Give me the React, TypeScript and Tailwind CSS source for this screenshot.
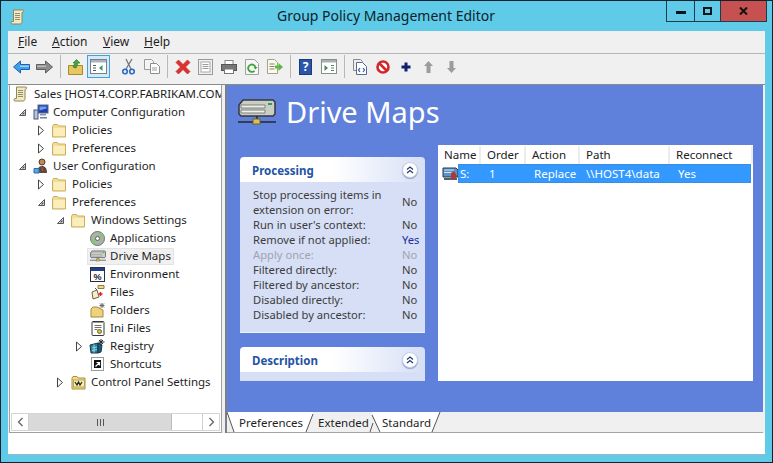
import React from "react";

const FONT = "font-['Noto_Sans','Open_Sans',sans-serif]";

type IconProps = { className?: string };

function Scroll({ className = "w-[15px] h-[16px] shrink-0" }: IconProps) {
  return (
    <svg viewBox="0 0 15 16" className={className}>
      <path d="M3.500 1h9.500c1 0 1 1.500 0 2l-1 .5v9c0 1.500-.8 2.500-2 2.500H2c-1.500 0-1.500-2 0-2.500h1.500z" fill="#f5e8bb" stroke="#8f8460" />
      <path d="M5 4.500h5M5 6.500h5M5 8.500h5M5 10.500h5" stroke="#8d8d80" />
    </svg>
  );
}

function Folder({ className = "w-[15px] h-[15px]" }: IconProps) {
  return (
    <svg viewBox="0 0 15 15" className={className}>
      <path d="M.5 3.500 1.500 1.500h4l1 1.500h7v11h-13z" fill="#f3dc97" stroke="#c8b063" />
      <path d="M1.500 5h11.500v8H1.500z" fill="#fbeebb" />
    </svg>
  );
}

function ComputerIcon() {
  return (
    <svg viewBox="0 0 16 16" className="w-4 h-4">
      <rect x="5" y="1" width="10" height="8" fill="#1f3fb0" stroke="#5a6b8a" />
      <path d="M6.500 2.500h7v2l-7 2z" fill="#6ea0f0" />
      <path d="M7 10h6v1.500H7z" fill="#8a94a8" />
      <rect x="1" y="6" width="4" height="9" fill="#b8c6dc" stroke="#46587a" />
      <path d="M7 13h7v1.500H7z" fill="#6f7f9f" />
    </svg>
  );
}

function UserIcon() {
  return (
    <svg viewBox="0 0 16 16" className="w-4 h-4">
      <circle cx="9" cy="4" r="3" fill="#b98a5a" stroke="#5e3d20" />
      <path d="M4 15c0-5 2-7 5-7s5 2 5 7z" fill="#5b4a3a" />
      <path d="M1 10.500h5v4.500H1z" fill="#57a6e8" stroke="#2f6cae" />
      <path d="M8.500 8.500 10 13" stroke="#d24a3a" />
    </svg>
  );
}

function AppIcon() {
  return (
    <svg viewBox="0 0 15 15" className="w-[15px] h-[15px]">
      <circle cx="7.500" cy="7.500" r="7" fill="#a9b3a9" stroke="#6c7268" />
      <path d="M7.500 7.500 11 1.500a7 7 0 0 1 3 5zM7.500 7.500 4 13.500a7 7 0 0 1-3-5z" fill="#8cc27a" />
      <circle cx="7.500" cy="7.500" r="2" fill="#fff" stroke="#5c625a" />
    </svg>
  );
}

function DriveIcon({ className = "w-[16px] h-[14px]" }: IconProps) {
  return (
    <svg viewBox="0 0 38 26" className={className}>
      <path d="M5 1h30l2 2v12l-2 2H3l-2-2V6z" fill="#c9cdc6" stroke="#34383a" strokeWidth="1.500" />
      <path d="M3 6h24v3H3zM3 11h24v3H3z" fill="#eef0ea" stroke="#7d827e" />
      <rect x="30" y="4" width="4" height="2" fill="#2f9a5a" />
      <path d="M19 17v4M0 23h38" stroke="#23282a" strokeWidth="1.500" />
      <rect x="15" y="20" width="7" height="5" fill="#d8c05a" stroke="#6f6524" />
    </svg>
  );
}

function EnvIcon() {
  return (
    <svg viewBox="0 0 15 15" className="w-[15px] h-[15px]">
      <rect x=".5" y=".5" width="14" height="14" fill="#fff" stroke="#25304a" />
      <rect x="1" y="1" width="13" height="3" fill="#243f8a" />
      <text x="7.500" y="13" textAnchor="middle" fontSize="9" fontFamily="Liberation Sans" fontWeight="700" fill="#222">%</text>
    </svg>
  );
}

function FilesIcon() {
  return (
    <svg viewBox="0 0 16 16" className="w-4 h-4">
      <path d="M8 1.500h6v3H8z" fill="#f0d98c" stroke="#8f7d3a" />
      <path d="M2 8l5-2 2 7-6 2z" fill="#f6eecb" stroke="#6c6440" />
      <path d="M10.500 8v4M8.500 10h4" stroke="#d8202a" strokeWidth="1.500" />
      <path d="M5 4l2 2" stroke="#555" />
    </svg>
  );
}

function FoldersIcon() {
  return (
    <svg viewBox="0 0 16 16" className="w-4 h-4">
      <path d="M1 7l2-2h4l6 3v7H1z" fill="#eed27e" stroke="#a58b3e" />
      <path d="M12 1v5M9.500 3.500h5M10 1.500l4 4M14 1.500l-4 4" stroke="#6a6a6a" />
    </svg>
  );
}

function IniIcon() {
  return (
    <svg viewBox="0 0 14 16" className="w-[14px] h-4">
      <rect x="1" y="1.500" width="12" height="14" rx="1" fill="#fff" stroke="#34383a" />
      <path d="M3 1v2M5 1v2M7 1v2M9 1v2M11 1v2" stroke="#333" />
      <path d="M3.500 5.500h7M3.500 7.500h7M3.500 9.500h3" stroke="#6c7268" />
      <circle cx="8.500" cy="11.500" r="2" fill="#d8c33a" stroke="#6c6420" />
    </svg>
  );
}

function RegistryIcon() {
  return (
    <svg viewBox="0 0 17 16" className="w-[17px] h-4">
      <path d="M1 7l8-2v10H2z" fill="#2a7f9e" stroke="#12384c" />
      <path d="M9 5l4 2-1 7-3 1z" fill="#1c5a75" stroke="#12384c" />
      <path d="M3 10l5-1M3 12.500l5-1M5 6.500v8" stroke="#9fd6e6" />
      <path d="M12 1v6M9.500 4h6M10 2l4 4M14 2l-4 4" stroke="#20282c" />
    </svg>
  );
}

function ShortcutIcon() {
  return (
    <svg viewBox="0 0 13 14" className="w-[13px] h-[14px]">
      <rect x=".5" y=".5" width="12" height="13" fill="#fff" stroke="#9a9a9a" />
      <rect x="3" y="3" width="7" height="8" fill="#111" />
      <path d="M4.500 9.500 8 6M5.500 5.500H8.500V8.500" stroke="#fff" strokeWidth="1.200" fill="none" />
    </svg>
  );
}

function ControlIcon() {
  return (
    <svg viewBox="0 0 16 15" className="w-4 h-[15px]">
      <path d="M1 3l1-1.500h4l1 1.500h7v11H1z" fill="#f3dc8c" stroke="#a8913f" />
      <rect x="2.500" y="5" width="11" height="7" fill="#f8eeb8" stroke="#b8a34f" />
      <path d="M4 7l2 3 1.500-3 1.500 3 2-3" stroke="#242424" strokeWidth="1.300" fill="none" />
    </svg>
  );
}

function Arrow({ kind }: { kind: "open" | "closed" | "none" }) {
  if (kind === "none") return <span className="w-[9px] h-[9px]" />;
  if (kind === "open")
    return (
      <svg viewBox="0 0 9 9" className="w-[9px] h-[9px]">
        <path d="M7.500 1.500v6h-6z" fill="#fff" stroke="#555" />
        <path d="M6.500 3.500v3h-3z" fill="#555" />
      </svg>
    );
  return (
    <svg viewBox="0 0 9 11" className="w-[9px] h-[11px]">
      <path d="M1.500 1v9l5-4.500z" fill="#fff" stroke="#444" />
    </svg>
  );
}

type TreeRow = { label: string; depth: number; arrow: "open" | "closed" | "none"; icon: React.ReactNode; selected?: boolean };

const rows: TreeRow[] = [
  { label: "Computer Configuration", depth: 0, arrow: "open", icon: <ComputerIcon /> },
  { label: "Policies", depth: 1, arrow: "closed", icon: <Folder /> },
  { label: "Preferences", depth: 1, arrow: "closed", icon: <Folder /> },
  { label: "User Configuration", depth: 0, arrow: "open", icon: <UserIcon /> },
  { label: "Policies", depth: 1, arrow: "closed", icon: <Folder /> },
  { label: "Preferences", depth: 1, arrow: "open", icon: <Folder /> },
  { label: "Windows Settings", depth: 2, arrow: "open", icon: <Folder /> },
  { label: "Applications", depth: 3, arrow: "none", icon: <AppIcon /> },
  { label: "Drive Maps", depth: 3, arrow: "none", icon: <DriveIcon />, selected: true },
  { label: "Environment", depth: 3, arrow: "none", icon: <EnvIcon /> },
  { label: "Files", depth: 3, arrow: "none", icon: <FilesIcon /> },
  { label: "Folders", depth: 3, arrow: "none", icon: <FoldersIcon /> },
  { label: "Ini Files", depth: 3, arrow: "none", icon: <IniIcon /> },
  { label: "Registry", depth: 3, arrow: "closed", icon: <RegistryIcon /> },
  { label: "Shortcuts", depth: 3, arrow: "none", icon: <ShortcutIcon /> },
  { label: "Control Panel Settings", depth: 2, arrow: "closed", icon: <ControlIcon /> },
];

const depthClass = ["pl-[8px]", "pl-[27px]", "pl-[46px]", "pl-[65px]"];

function Tree() {
  return (
    <div className="flex-1 overflow-hidden text-[11.5px]">
      <div className="h-[18px] flex items-center pl-[3px] whitespace-nowrap text-[#1e1e1e]">
        <Scroll />
        <span className="ml-[6px]">Sales [HOST4.CORP.FABRIKAM.COM</span>
      </div>
      {rows.map((r, i) => (
        <div key={i} className={`h-[18px] flex items-center whitespace-nowrap text-[#1e1e1e] ${depthClass[r.depth]}`}>
          <span className="w-[15px] flex justify-start items-center">
            <Arrow kind={r.arrow} />
          </span>
          <span className={`flex items-center h-[17px] -ml-[3px] pl-[1px] pr-[2px] ${r.selected ? "bg-[#f0f0f0] border border-[#e4e4e4] -my-px" : "border border-transparent"}`}>
            <span className="w-[17px] flex justify-center items-center mr-[4px]">{r.icon}</span>
            <span>{r.label}</span>
          </span>
        </div>
      ))}
    </div>
  );
}

function TreeScrollbar() {
  return (
    <div className="h-[18px] mx-px mb-px flex items-stretch border border-[#d5d5d5] bg-white">
      <div className="w-[17px] border-r border-[#d0d0d0] flex items-center justify-center">
        <svg viewBox="0 0 7 10" className="w-[7px] h-[10px]"><path d="M5.500 1 1.500 5l4 4" fill="none" stroke="#666" strokeWidth="1.300" /></svg>
      </div>
      <div className="w-[143px] bg-[#d9d9d9] flex items-center justify-center gap-px border-r border-[#bdbdbd]">
        <span className="w-px h-[7px] bg-[#555]" />
        <span className="w-px h-[7px] bg-[#555] ml-px" />
        <span className="w-px h-[7px] bg-[#555] ml-px" />
      </div>
      <div className="flex-1" />
      <div className="w-[17px] border-l border-[#d0d0d0] flex items-center justify-center">
        <svg viewBox="0 0 7 10" className="w-[7px] h-[10px]"><path d="M1.500 1l4 4-4 4" fill="none" stroke="#666" strokeWidth="1.300" /></svg>
      </div>
    </div>
  );
}

function Sep({ w = "w-[8px]" }: { w?: string }) {
  return <span className={`${w} flex justify-center`}><span className="w-px h-[23px] bg-[#b8b8b8]" /></span>;
}

function ToolBtn({ children, active }: { children: React.ReactNode; active?: boolean }) {
  return (
    <span className={`w-[23px] h-[23px] flex items-center justify-center ${active ? "bg-[#d5e9f7] border border-[#3fa2dc]" : ""}`}>
      {children}
    </span>
  );
}

function Toolbar() {
  return (
    <div className="h-[30px] flex items-start pt-px pl-[2px] bg-[#f0f0f0] shrink-0">
      <ToolBtn>
        <svg viewBox="0 0 17 14" className="w-[17px] h-[14px]"><path d="M.5 7 7.500 1v3.500h9v5h-9V13z" fill="#3f9fe8" stroke="#1f5fb0" /><path d="M7 5.500h9v1.500H7z" fill="#9ad3f8" /></svg>
      </ToolBtn>
      <ToolBtn>
        <svg viewBox="0 0 17 14" className="w-[17px] h-[14px]"><path d="M16.500 7 9.500 1v3.500h-9v5h9V13z" fill="#8a8a8a" stroke="#5e5e5e" /><path d="M1 5.500h9v1.500H1z" fill="#bcbcbc" /></svg>
      </ToolBtn>
      <Sep />
      <ToolBtn>
        <svg viewBox="0 0 15 16" className="w-[15px] h-4"><path d="M.5 6.500h14v9H.5z" fill="#e8c660" stroke="#a68a2e" /><path d="M5 8l2-4H5l3.500-3.500L12 4h-2L8 9z" fill="#43a83a" stroke="#22701e" strokeWidth=".6" /></svg>
      </ToolBtn>
      <ToolBtn active>
        <svg viewBox="0 0 17 15" className="w-[17px] h-[15px]"><rect x=".5" y=".5" width="16" height="14" fill="#fff" stroke="#77808a" /><path d="M1 1h15v2.500H1z" fill="#a9b3be" /><path d="M3 6h3v1H3zM3 8.500h3v1H3zM3 11h3v1H3z" fill="#556" /><path d="M12.500 6v6l-3.500-3z" fill="#3f9a4a" /></svg>
      </ToolBtn>
      <span className="w-[7px]" />
      <ToolBtn>
        <svg viewBox="0 0 13 17" className="w-[13px] h-[17px]"><path d="M10 1 4 11M4 1l5 10" stroke="#6a7885" strokeWidth="1.300" /><circle cx="3" cy="13.500" r="2.300" fill="none" stroke="#2a68c8" strokeWidth="1.600" /><circle cx="10" cy="13.500" r="2.300" fill="none" stroke="#2a68c8" strokeWidth="1.600" /></svg>
      </ToolBtn>
      <ToolBtn>
        <svg viewBox="0 0 16 15" className="w-4 h-[15px]"><path d="M.5.500h7l2 2v8h-9z" fill="#f4f4f4" stroke="#9b9b9b" /><path d="M6.500 4.500h6l3 3v7h-9z" fill="#fff" stroke="#8d8d8d" /><path d="M8 9h5M8 11h5" stroke="#9a9a9a" /></svg>
      </ToolBtn>
      <Sep />
      <ToolBtn>
        <svg viewBox="0 0 16 16" className="w-4 h-4"><path d="M1 3.500 3.500 1 8 5.500 12.500 1 15 3.500 10.500 8l4.500 4.500-2.500 2.500L8 10.500 3.500 15 1 12.500 5.500 8z" fill="#e0312c" stroke="#a8201c" strokeWidth=".6" /></svg>
      </ToolBtn>
      <ToolBtn>
        <svg viewBox="0 0 15 16" className="w-[15px] h-4"><rect x=".5" y=".5" width="14" height="15" fill="#f0f0f0" stroke="#9a9a9a" /><rect x="3" y="3" width="9" height="10" fill="#fff" stroke="#a8a8a8" /><path d="M4.500 5.500h6M4.500 7.500h6M4.500 9.500h6" stroke="#9a9a9a" /></svg>
      </ToolBtn>
      <ToolBtn>
        <svg viewBox="0 0 16 14" className="w-4 h-[14px]"><rect x="4" y=".5" width="8" height="4" fill="#fff" stroke="#888" /><rect x=".5" y="4.500" width="15" height="6" fill="#777" stroke="#555" /><rect x="3.500" y="9" width="9" height="4.500" fill="#fff" stroke="#777" /></svg>
      </ToolBtn>
      <ToolBtn>
        <svg viewBox="0 0 14 16" className="w-[14px] h-4"><path d="M.5.500h9l4 4v11H.5z" fill="#f6f6f6" stroke="#a0a0a0" /><path d="M10.500 8.500a3.700 3.700 0 1 0-1 3.300" fill="none" stroke="#3da33a" strokeWidth="1.800" /><path d="M8.500 8h4l-2 2.500z" fill="#3da33a" /></svg>
      </ToolBtn>
      <ToolBtn>
        <svg viewBox="0 0 16 15" className="w-4 h-[15px]"><path d="M.5.500h7l3 3v11H.5z" fill="#fbf8ee" stroke="#a8a088" /><path d="M2.500 5h5M2.500 7.500h5M2.500 10h5" stroke="#8c8468" /><path d="M8 6.500h3.500V4L16 8l-4.500 4V9.500H8z" fill="#5cb848" /></svg>
      </ToolBtn>
      <Sep />
      <ToolBtn>
        <span className="w-[13px] h-[16px] bg-[#2b55a8] border border-[#1c3a78] text-white text-[12px] font-bold leading-[14px] text-center">?</span>
      </ToolBtn>
      <ToolBtn>
        <svg viewBox="0 0 16 15" className="w-4 h-[15px]"><rect x=".5" y=".5" width="15" height="14" fill="#fff" stroke="#84908a" /><path d="M1 1h14v2.500H1z" fill="#a9b3ae" /><path d="M3.500 6v6L7 9zM10 6h3v1h-3zM10 8.500h3v1h-3zM10 11h3v1h-3z" fill="#4a8a5a" /></svg>
      </ToolBtn>
      <Sep />
      <ToolBtn>
        <svg viewBox="0 0 14 16" className="w-[14px] h-4"><path d="M.5.500h7l2 2v9h-9z" fill="#eee" stroke="#8a8a8a" /><path d="M3.500 3.500h6l4 4v8h-10z" fill="#fff" stroke="#5a6a8a" /><path d="M7 9 5.500 11 7 13M10 9l1.500 2-1.500 2" fill="none" stroke="#2a58a8" strokeWidth="1.200" /></svg>
      </ToolBtn>
      <ToolBtn>
        <svg viewBox="0 0 14 14" className="w-[14px] h-[14px]"><circle cx="7" cy="7" r="5.500" fill="#fff" stroke="#d2262a" strokeWidth="2.600" /><path d="M3.500 3.500l7 7" stroke="#d2262a" strokeWidth="2.600" /></svg>
      </ToolBtn>
      <ToolBtn>
        <svg viewBox="0 0 10 10" className="w-[10px] h-[10px]"><path d="M5 .5v9M.5 5h9" stroke="#10206e" strokeWidth="3" /></svg>
      </ToolBtn>
      <ToolBtn>
        <svg viewBox="0 0 9 12" className="w-[9px] h-3"><path d="M4.500 0 9 5H6.500v7h-4V5H0z" fill="#9c9c9c" /></svg>
      </ToolBtn>
      <ToolBtn>
        <svg viewBox="0 0 9 12" className="w-[9px] h-3"><path d="M4.500 12 9 7H6.500V0h-4v7H0z" fill="#9c9c9c" /></svg>
      </ToolBtn>
    </div>
  );
}

function Chevron() {
  return (
    <span className="w-[16px] h-[16px] rounded-full bg-white border border-[#c4cfe6] flex items-center justify-center shadow-[0_1px_1px_#8fa0c8]">
      <svg viewBox="0 0 8 8" className="w-[8px] h-[8px]"><path d="M1 3.500l3-2.500 3 2.500M1 7l3-2.500L7 7" fill="none" stroke="#1f3a70" strokeWidth="1.200" /></svg>
    </span>
  );
}

function BoxHeader({ title }: { title: string }) {
  return (
    <div className="h-[25px] rounded-t-[4px] bg-gradient-to-r from-white via-white to-[#d6dff5] flex items-center justify-between pl-[12px] pr-[7px]">
      <span className="font-bold text-[#2353a6] text-[11.5px] mt-[2px]">{title}</span>
      <Chevron />
    </div>
  );
}

const settings: { label: React.ReactNode; value: string; tone?: string; tall?: boolean }[] = [
  { label: <>Stop processing items in<br />extension on error:</>, value: "No", tall: true },
  { label: "Run in user's context:", value: "No" },
  { label: "Remove if not applied:", value: "Yes", tone: "blue" },
  { label: "Apply once:", value: "No", tone: "gray" },
  { label: "Filtered directly:", value: "No" },
  { label: "Filtered by ancestor:", value: "No" },
  { label: "Disabled directly:", value: "No" },
  { label: "Disabled by ancestor:", value: "No" },
];

function Processing() {
  return (
    <div className="w-[185px] border-b border-[#eef2fb]">
      <BoxHeader title="Processing" />
      <div className="bg-[#d6dff5] h-[150px] pl-[13px] pr-[5px] pt-[5px] text-[#3c3c3c] text-[11.2px] leading-[15px]">
        {settings.map((s, i) => (
          <div key={i} className={`flex justify-between ${s.tall ? "h-[30px]" : "h-[15px]"} ${s.tone === "gray" ? "text-[#a0a4b0]" : ""}`}>
            <span>{s.label}</span>
            <span className={`w-[18px] ${s.tall ? "pt-[7px]" : ""} ${s.tone === "blue" ? "text-[#1c2fa0]" : ""}`}>{s.value}</span>
          </div>
        ))}
      </div>
    </div>
  );
}

const columns = [
  { name: "Name", w: "w-[43px]" },
  { name: "Order", w: "w-[45px]" },
  { name: "Action", w: "w-[54px]" },
  { name: "Path", w: "w-[90px]" },
  { name: "Reconnect", w: "flex-1" },
];

function DriveTable() {
  return (
    <div className="w-[315px] h-[236px] bg-white text-[11.5px] text-[#222]">
      <div className="h-[19px] flex pt-[1px]">
        {columns.map((c) => (
          <span key={c.name} className={`${c.w} pl-[6px] border-r-2 border-[#ededed] leading-[18px]`}>{c.name}</span>
        ))}
      </div>
      <div className="flex h-[19px] pl-[4px] pr-[2px]">
        <svg viewBox="0 0 17 14" className="w-[17px] h-[14px] mt-[2px] -mr-px shrink-0">
          <path d="M1 2h13l2 2v7H1z" fill="#5d92c8" stroke="#25384e" />
          <path d="M2 4h10M2 6.500h10" stroke="#cfe2f4" />
          <path d="M2 13h13" stroke="#1d2a3a" strokeWidth="1.500" />
          <path d="M9 7l3-2 3 5-2 3H9z" fill="#a83a3a" />
        </svg>
        <div className="flex-1 flex bg-[#3399ff] text-white leading-[18px] border border-[#3a8ee0] whitespace-nowrap">
          <span className="w-[24px] pl-[1px]">S:</span>
          <span className="w-[45px] pl-[6px]">1</span>
          <span className="w-[54px] pl-[6px]">Replace</span>
          <span className="w-[90px] pl-[4px]">\\HOST4\data</span>
          <span className="flex-1 pl-[6px]">Yes</span>
        </div>
      </div>
    </div>
  );
}

function Tabs() {
  return (
    <div className="relative h-[21px] bg-[#f0f0f0] border-b border-[#a5a5a5] flex text-[11.5px] text-[#1e1e1e] shrink-0">
      <svg viewBox="0 0 230 21" className="absolute left-0 top-0 w-[230px] h-[21px]">
        <path d="M0 0 7 20H79L86 0H213L205 20H153L145 0z" fill="#fff" />
        <path d="M0 0 7 20M79 20 86 2M143 20 146 11M145 3l8 17M205 20 213 0" fill="none" stroke="#555" />
      </svg>
      <span className="relative ml-[12px] w-[79px] leading-[21px]">Preferences</span>
      <span className="relative w-[64px] leading-[21px]">Extended</span>
      <span className="relative leading-[21px]">Standard</span>
    </div>
  );
}

export default function App() {
  return (
    <div className={`w-[773px] h-[463px] overflow-hidden bg-[#5fcbe8] border border-[#10222c] flex flex-col text-[12px] ${FONT}`}>
      <div className="h-[30px] relative flex items-center shrink-0">
        <span className="ml-[9px] mt-[1px]"><Scroll /></span>
        <span className="flex-1 pl-[252px] text-[14px] leading-[30px] text-[#0e1e28] whitespace-nowrap">Group Policy Management Editor</span>
        <div className="absolute top-0 right-[5px] h-[21px] flex border-x border-b border-[#1d3d4c]">
          <span className="w-[28px] flex items-center justify-center border-r border-[#1d3d4c]">
            <span className="w-[10px] h-[3px] bg-[#0a141a] mt-[3px]" />
          </span>
          <span className="w-[26px] flex items-center justify-center border-r border-[#1d3d4c]">
            <span className="w-[9px] h-[8px] border-2 border-[#0a141a]" />
          </span>
          <span className="w-[45px] bg-[#c75050] flex items-center justify-center">
            <svg viewBox="0 0 9 8" className="w-[9px] h-[8px]"><path d="M1 .5l7 7M8 .5l-7 7" stroke="#111" strokeWidth="2" /></svg>
          </span>
        </div>
      </div>

      <div className="flex-1 mx-[7px] mb-[7px] flex flex-col bg-white border-b border-[#9fb4bd] min-h-0">
        <div className="h-[23px] bg-[#f0f0f0] border-b border-[#b5b5b5] flex items-center text-[12px] text-[#1e1e1e] pl-[10px] shrink-0">
          <span className="w-[34px]"><u>F</u>ile</span>
          <span className="w-[51px]"><u>A</u>ction</span>
          <span className="w-[41px]"><u>V</u>iew</span>
          <span><u>H</u>elp</span>
        </div>
        <Toolbar />
        <div className="flex h-[349px] shrink-0 bg-[#f0f0f0] border-t border-[#8a8a8a]">
          <div className="w-[213px] ml-px bg-white border border-[#a0a0a0] border-t-0 flex flex-col">
            <Tree />
            <TreeScrollbar />
          </div>
          <div className="w-[3px]" />
          <div className="flex-1 mr-[2px] flex flex-col border-l-2 border-[#7a7f8a]">
            <div className="flex-1 bg-[#6081db] flex flex-col overflow-hidden">
              <div className="flex items-center pl-[11px] pb-[6px] h-[60px] shrink-0">
                <DriveIcon className="w-[38px] h-[26px]" />
                <span className="ml-[10px] text-[29px] leading-[40px] text-white whitespace-nowrap">Drive Maps</span>
              </div>
              <div className="flex gap-[13px] pl-[13px]">
                <div className="w-[185px] h-[236px] overflow-hidden pt-[12px] flex flex-col gap-[14px]">
                  <Processing />
                  <div className="w-[185px] shrink-0">
                    <BoxHeader title="Description" />
                    <div className="bg-[#d6dff5] h-[40px] pl-[13px] pt-[5px] text-[#3c3c3c] text-[11.2px] leading-[15px]">
                      Maps shared drives to letters
                    </div>
                  </div>
                </div>
                <DriveTable />
              </div>
            </div>
            <Tabs />
          </div>
        </div>
        <div className="flex-1 bg-white" />
      </div>
    </div>
  );
}
